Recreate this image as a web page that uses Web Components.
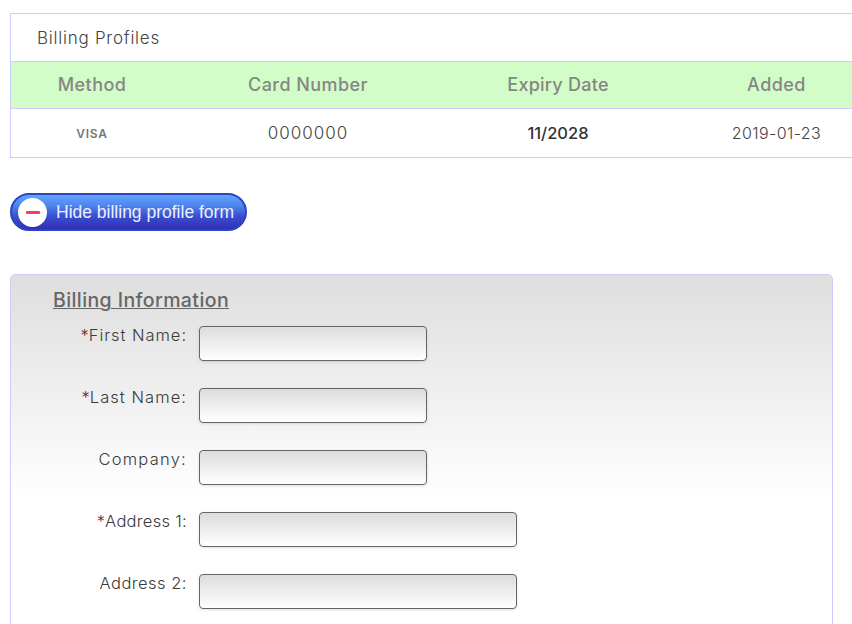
<!DOCTYPE html>
<html lang="en">
<head>
<meta charset="utf-8">
<title>Billing Profiles</title>
<style>
html, body { margin: 0; height: 100%; overflow: hidden; background: #fff; }
body { font-family: Inter, "Liberation Sans", sans-serif; color: #333; }
</style>
</head>
<body>
<billing-page>
    <billing-profiles heading="Billing Profiles">
        <profile-row method="VISA" number="0000000" expiry="11/2028" added="2019-01-23"></profile-row>
    </billing-profiles>
    <toggle-button>Hide billing profile form</toggle-button>
    <billing-form heading="Billing Information">
        <form-field required size="short" style="--track: .95px">First Name:</form-field>
        <form-field required size="short" style="--track: 1.05px">Last Name:</form-field>
        <form-field size="short" style="--track: 1.25px">Company:</form-field>
        <form-field required size="long" style="--track: .3px">Address 1:</form-field>
        <form-field size="long" style="--track: .5px">Address 2:</form-field>
    </billing-form>
</billing-page>

<script>
'use strict'

class BillingPage extends HTMLElement {
    constructor() {
        super();
        const shadow = this.attachShadow({mode: 'open'});
        shadow.innerHTML = `
            <style>
            :host {
                display: flex;
                flex-direction: column;
                align-items: flex-start;
                padding: 13px 0 0 10px;
                width: 842px;
                overflow: hidden;
            }
            </style>
            <slot></slot>
        `;
    }
}

class BillingProfiles extends HTMLElement {
    constructor() {
        super();
        const shadow = this.attachShadow({mode: 'open'});
        shadow.innerHTML = `
            <style>
            :host {
                border: 1px solid #ccccff;
                border-right: 0;
                box-sizing: border-box;
                display: block;
                flex: none;
                width: 870px;
            }
            h2 {
                color: #444;
                font-size: 17px;
                font-weight: 350;
                height: 47px;
                letter-spacing: .75px;
                line-height: 48px;
                margin: 0;
                padding-left: 26px;
            }
            .head {
                background: #d2fdc8;
                border-bottom: 1px solid #ccccff;
                border-top: 1px solid #ccccff;
                color: #868686;
                display: grid;
                font-size: 18px;
                font-weight: 500;
                grid-template-columns: 162px 270px 230px 207px;
                height: 46px;
                letter-spacing: .45px;
                line-height: 46px;
                text-align: center;
            }
            .head .expiry { letter-spacing: .25px; }
            </style>
            <h2></h2>
            <div class="head">
                <span>Method</span>
                <span>Card Number</span>
                <span class="expiry">Expiry Date</span>
                <span>Added</span>
            </div>
            <slot></slot>
        `;
        shadow.querySelector('h2').textContent = this.getAttribute('heading');
    }
}

class ProfileRow extends HTMLElement {
    constructor() {
        super();
        const shadow = this.attachShadow({mode: 'open'});
        shadow.innerHTML = `
            <style>
            :host {
                display: grid;
                font-size: 16px;
                font-weight: 350;
                grid-template-columns: 162px 270px 230px 207px;
                height: 48px;
                line-height: 49px;
                text-align: center;
                color: #444;
            }
            .method {
                color: #777;
                font-size: 12px;
                font-weight: 600;
                letter-spacing: .7px;
            }
            .number { font-size: 17px; letter-spacing: 1px; }
            .expiry { color: #333; font-size: 16.5px; font-weight: 500; }
            .added { letter-spacing: .4px; }
            </style>
            <span class="method"></span>
            <span class="number"></span>
            <span class="expiry"></span>
            <span class="added"></span>
        `;
        for (const name of ['method', 'number', 'expiry', 'added']) {
            shadow.querySelector('.' + name).textContent = this.getAttribute(name);
        }
    }
}

class ToggleButton extends HTMLElement {
    constructor() {
        super();
        const shadow = this.attachShadow({mode: 'open'});
        shadow.innerHTML = `
            <style>
            :host {
                align-items: center;
                background: linear-gradient(#62a4ff 0%, #4f86ee 30%, #3a50d0 62%, #2f2fb8 100%);
                border: 2px solid #2a46c4;
                border-radius: 19px;
                box-sizing: border-box;
                color: #eef0ff;
                column-gap: 9px;
                display: flex;
                flex: none;
                font-family: "Liberation Sans", Arial, sans-serif;
                font-size: 17.5px;
                height: 38px;
                margin-top: 35px;
                padding-left: 6px;
                width: 237px;
            }
            .icon {
                align-items: center;
                background: #fff;
                border-radius: 50%;
                display: flex;
                flex: none;
                height: 29px;
                justify-content: center;
                width: 29px;
            }
            .icon i {
                background: #f5414d;
                border-radius: 1px;
                display: block;
                height: 3px;
                width: 14px;
            }
            </style>
            <span class="icon"><i></i></span>
            <slot></slot>
        `;
    }
}

class BillingForm extends HTMLElement {
    constructor() {
        super();
        const shadow = this.attachShadow({mode: 'open'});
        shadow.innerHTML = `
            <style>
            :host {
                background: linear-gradient(#dedede 0, #ffffff 225px);
                border: 1px solid #ccccff;
                border-radius: 5px;
                box-sizing: border-box;
                display: flex;
                flex: none;
                flex-direction: column;
                height: 420px;
                margin-top: 43px;
                padding: 14px 0 0 42px;
                row-gap: 27px;
                width: 823px;
            }
            h3 {
                color: #666;
                font-size: 19.5px;
                font-weight: 500;
                height: 24px;
                letter-spacing: .4px;
                line-height: 22px;
                margin: 0 0 -14px;
                text-decoration: underline;
                text-underline-offset: 1px;
                text-decoration-thickness: 1px;
            }
            </style>
            <h3></h3>
            <slot></slot>
        `;
        shadow.querySelector('h3').textContent = this.getAttribute('heading');
    }
}

class FormField extends HTMLElement {
    constructor() {
        super();
        const shadow = this.attachShadow({mode: 'open'});
        shadow.innerHTML = `
            <style>
            :host {
                column-gap: 12px;
                display: flex;
                font-size: 16.5px;
                font-weight: 350;
                height: 35px;
                letter-spacing: var(--track, .5px);
                color: #3a3a3a;
            }
            label {
                flex: none;
                line-height: 18px;
                margin-left: -42px;
                text-align: right;
                width: 176px;
            }
            .mark { color: #7a2020; font-weight: 300; letter-spacing: 0; }
            input {
                background: linear-gradient(#dcdcdc, #ffffff);
                border: 1px solid #666;
                border-radius: 4px;
                box-shadow: 0 1px 3px rgba(0, 0, 0, .12);
                box-sizing: border-box;
                height: 35px;
                margin: 0;
                padding: 0 6px;
                width: 228px;
            }
            :host([size="long"]) input { width: 318px; }
            </style>
            <label><span class="mark"></span><slot></slot></label>
            <input type="text">
        `;
        if (this.hasAttribute('required')) {
            shadow.querySelector('.mark').textContent = '*';
        }
    }
}

customElements.define('billing-page', BillingPage);
customElements.define('billing-profiles', BillingProfiles);
customElements.define('profile-row', ProfileRow);
customElements.define('toggle-button', ToggleButton);
customElements.define('billing-form', BillingForm);
customElements.define('form-field', FormField);
</script>
</body>
</html>
